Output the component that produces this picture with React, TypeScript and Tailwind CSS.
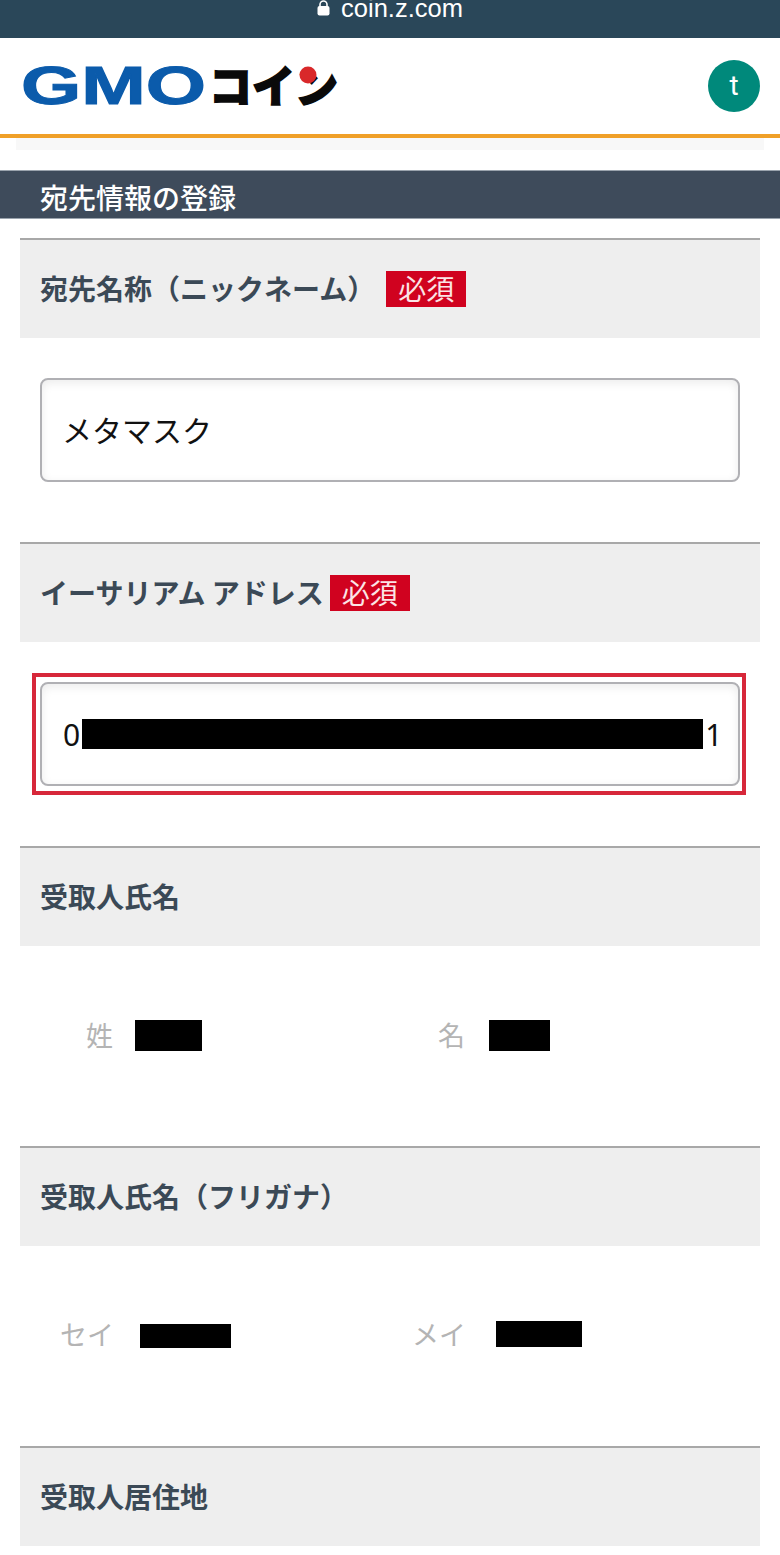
const jp = "font-['Noto_Sans_CJK_JP','Noto_Sans',sans-serif]";

function Logo() {
  return (
    <svg width="330" height="56" viewBox="0 0 330 56" className="block">
      <text x="-2" y="45" fontFamily="'Liberation Sans', sans-serif" fontWeight="700" fontSize="53" fill="#0b5bab" stroke="#0b5bab" strokeWidth="1" textLength="185" lengthAdjust="spacingAndGlyphs">GMO</text>
      <text x="186" y="44" fontFamily="'Noto Sans CJK JP', sans-serif" fontWeight="900" fontSize="44" fill="#0a0a0a" stroke="#0a0a0a" strokeWidth="1.5" textLength="129" lengthAdjust="spacingAndGlyphs">コイン</text>
      <circle cx="285" cy="16" r="8.5" fill="#d9282a" />
    </svg>
  );
}

function Required({ className }: { className: string }) {
  return (
    <span className={"flex h-[36px] w-[80px] items-center justify-center bg-[#d0021f] text-[28px] font-normal leading-none text-[#fbe4e6] " + className}>
      <span className="relative -top-[1px]">必須</span>
    </span>
  );
}

function RowHead({ title, badge }: { title: string; badge?: string }) {
  return (
    <div className="mx-[20px] flex h-[100px] items-center border-t-2 border-[#a8a8a8] bg-[#eeeeee] pl-[20px] text-[28px] font-bold text-[#3b4956]">
      <span className="relative -top-[1px]">{title}</span>
      {badge && <Required className={badge} />}
    </div>
  );
}

function InputBox({ children }: { children: React.ReactNode }) {
  return (
    <div className="flex h-[104px] items-center rounded-[8px] border-2 border-[#b0b0b4] bg-white pl-[21px] text-[30px] text-[#111] shadow-[inset_0_3px_10px_rgba(0,0,0,0.08)]">
      {children}
    </div>
  );
}

function Redact({ className }: { className: string }) {
  return <span className={"block bg-black " + className} />;
}

export default function App() {
  return (
    <div className={"h-[1555px] w-[780px] overflow-hidden bg-white " + jp}>
      <div className="flex h-[38px] items-start justify-center overflow-hidden bg-[#2a4759] text-white">
        <div className="flex items-center gap-[11px] font-['Liberation_Sans',sans-serif] text-[25.5px] leading-[14px]">
          <svg width="13" height="16" viewBox="0 0 13 16">
            <path d="M3 7V4.5a3.5 3.5 0 0 1 7 0V7" fill="none" stroke="white" strokeWidth="1.6" />
            <rect x="0.5" y="6" width="12" height="9.5" rx="2" fill="white" />
          </svg>
          <span>coin.z.com</span>
        </div>
      </div>

      <header className="flex h-[96px] items-center justify-between pl-[23px] pr-[20px]">
        <div className="mt-[1px]">
          <Logo />
        </div>
        <div className="flex h-[52px] w-[52px] items-center justify-center rounded-full bg-[#00897b] font-['Roboto',sans-serif] text-[28px] text-white">
          t
        </div>
      </header>
      <div className="h-[4px] bg-[#f0a028]" />
      <div className="mx-[16px] h-[12px] bg-[#f8f8f8]" />

      <h1 className="mt-[20px] flex h-[49px] items-center overflow-hidden border-y border-[#9aa3ad] bg-[#3e4b5b] pl-[40px] text-[28px] font-medium text-white">
        <span className="relative top-[2px]">宛先情報の登録</span>
      </h1>

      <div className="mt-[19px]">
        <RowHead title="宛先名称（ニックネーム）" badge="ml-[11px]" />
        <div className="mx-[40px] mt-[40px]">
          <InputBox>
            <span className="relative -left-[1px] -top-[1px]">メタマスク</span>
          </InputBox>
        </div>
      </div>

      <div className="mt-[60px]">
        <RowHead title="イーサリアム アドレス" badge="ml-[6px]" />
        <div className="ml-[32px] mr-[34px] mt-[31px] border-[4px] border-[#d7273a] py-[5px] pl-[4px] pr-[2px]">
          <InputBox>
            <span className="font-['Noto_Sans',sans-serif]">0</span>
            <Redact className="ml-[2px] h-[30px] w-[621px]" />
            <span className="ml-[2px] font-['Noto_Sans',sans-serif]">1</span>
          </InputBox>
        </div>
      </div>

      <div className="mt-[51px]">
        <RowHead title="受取人氏名" />
        <div className="flex h-[200px] items-start pt-[71px] text-[27px] leading-[36px] text-[#b4b4b4]">
          <div className="flex w-[352px] items-center pl-[86px]">
            <span>姓</span>
            <Redact className="ml-[22px] h-[31px] w-[67px]" />
          </div>
          <div className="flex items-center pl-[86px]">
            <span>名</span>
            <Redact className="ml-[24px] h-[31px] w-[61px]" />
          </div>
        </div>
      </div>

      <div>
        <RowHead title="受取人氏名（フリガナ）" />
        <div className="flex h-[200px] items-start pt-[72px] text-[27px] leading-[36px] text-[#b4b4b4]">
          <div className="flex w-[354px] items-center pl-[60px]">
            <span className="relative -top-[2px]">セイ</span>
            <Redact className="ml-[26px] h-[24px] w-[91px]" />
          </div>
          <div className="flex items-center pl-[58px]">
            <span className="relative -top-[2px]">メイ</span>
            <Redact className="ml-[30px] -mt-[5px] h-[26px] w-[86px]" />
          </div>
        </div>
      </div>

      <RowHead title="受取人居住地" />
    </div>
  );
}
